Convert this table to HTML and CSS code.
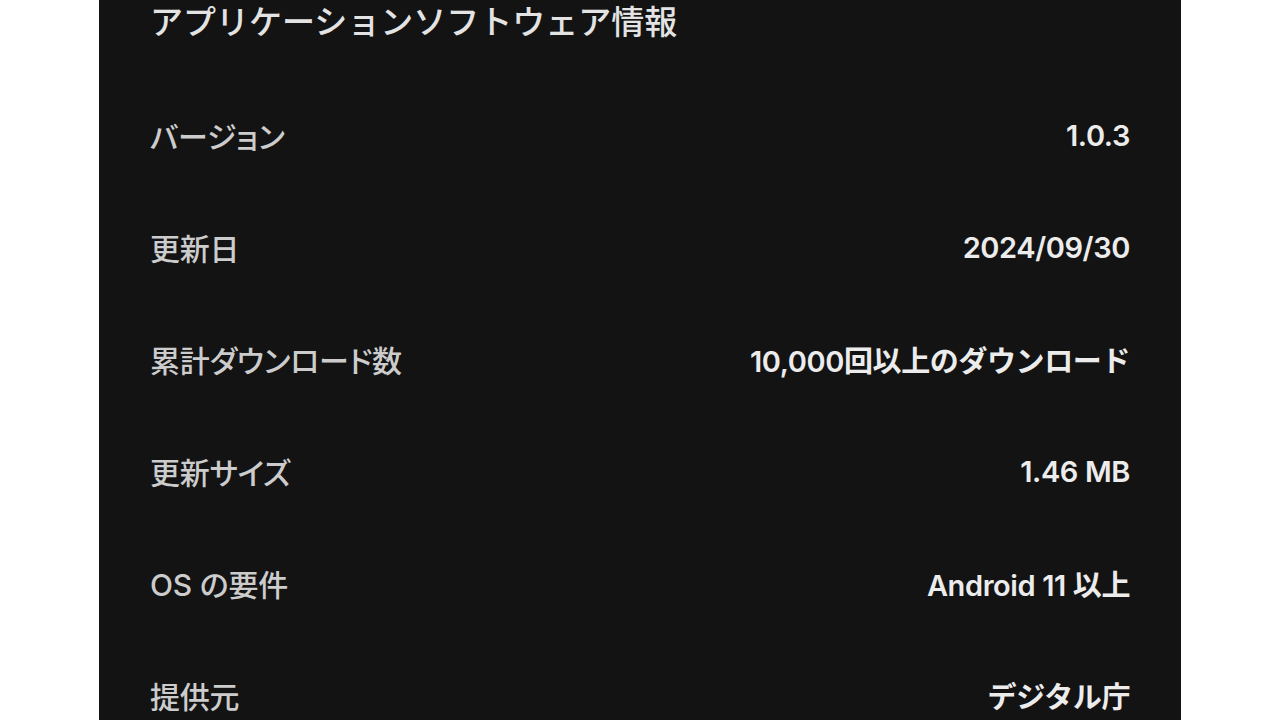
FILE: index.html
```html
<!DOCTYPE html>
<html lang="ja">
<head>
    <meta charset="UTF-8">
    <meta name="viewport" content="width=device-width, initial-scale=1.0">
    <title>アプリケーションソフトウェア情報</title>
    <link rel="stylesheet" href="styles.css">
</head>
<body>
    <div class="panel">
        <h1 class="title">アプリケーションソフトウェア情報</h1>

        <div class="info-list">
            <div class="row">
                <span class="label">バージョン</span>
                <span class="value">1.0.3</span>
            </div>
            <div class="row">
                <span class="label">更新日</span>
                <span class="value">2024/09/30</span>
            </div>
            <div class="row">
                <span class="label">累計ダウンロード数</span>
                <span class="value">10,000回以上のダウンロード</span>
            </div>
            <div class="row">
                <span class="label">更新サイズ</span>
                <span class="value">1.46 MB</span>
            </div>
            <div class="row">
                <span class="label">OS の要件</span>
                <span class="value">Android 11 以上</span>
            </div>
            <div class="row">
                <span class="label">提供元</span>
                <span class="value">デジタル庁</span>
            </div>
        </div>
    </div>
</body>
</html>
```

FILE: styles.css
```css
body, html {
    margin: 0;
    padding: 0;
    height: 100%;
    overflow: hidden;
    background-color: #ffffff;
}

.panel {
    width: 1082px;
    height: 720px;
    margin-left: 99px;
    padding: 0 51px;
    box-sizing: border-box;
    background-color: #131314;
    font-family: Inter, "Noto Sans CJK JP", sans-serif;
    overflow: hidden;
}

.title {
    margin: 0;
    height: 44px;
    line-height: 44px;
    font-size: 33px;
    font-weight: 500;
    color: #e3e3e3;
}

.info-list {
    margin-top: 35px;
}

.row {
    display: flex;
    justify-content: space-between;
    align-items: center;
    height: 112px;
}

.label {
    font-size: 30px;
    font-weight: 500;
    letter-spacing: -0.2px;
    color: #cccccc;
    font-feature-settings: "palt";
}

.value {
    font-size: 29px;
    font-weight: 600;
    letter-spacing: -0.4px;
    color: #ececec;
    text-align: right;
}
```
